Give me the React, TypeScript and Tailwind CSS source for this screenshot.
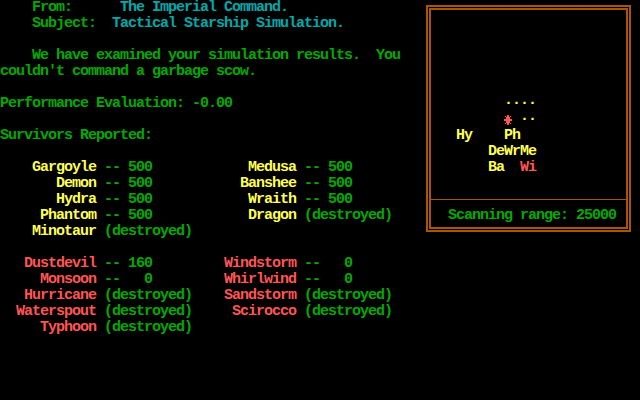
import React from 'react'

// DOS text-mode palette
const GREEN = 'text-[#00aa00]'
const CYAN = 'text-[#00aaaa]'
const YELLOW = 'text-[#ffff55]'
const RED = 'text-[#ff5555]'

type Seg = [string, string]

function Line({ segs }: { segs: Seg[] }) {
  return (
    <div className="h-4 whitespace-pre leading-4">
      {segs.map(([text, color], i) => (
        <span key={i} className={color}>
          {text}
        </span>
      ))}
    </div>
  )
}

const pad = (s: string, n: number) => s.padStart(n, ' ')

interface Ship {
  name: string
  value: string | null
}

function shipSegs(left: Ship, right: Ship | null, color: string): Seg[] {
  const segs: Seg[] = [
    [pad(left.name, 12), color],
    [left.value === null ? ' (destroyed)' : ' -- ' + pad(left.value, 3), GREEN],
  ]
  if (right) {
    const used = left.value === null ? 24 : 19
    segs.push([pad(right.name, 37 - used), color])
    segs.push([right.value === null ? ' (destroyed)' : ' -- ' + pad(right.value, 3), GREEN])
  }
  return segs
}

const monsters: [Ship, Ship | null][] = [
  [{ name: 'Gargoyle', value: '500' }, { name: 'Medusa', value: '500' }],
  [{ name: 'Demon', value: '500' }, { name: 'Banshee', value: '500' }],
  [{ name: 'Hydra', value: '500' }, { name: 'Wraith', value: '500' }],
  [{ name: 'Phantom', value: '500' }, { name: 'Dragon', value: null }],
  [{ name: 'Minotaur', value: null }, null],
]

const storms: [Ship, Ship | null][] = [
  [{ name: 'Dustdevil', value: '160' }, { name: 'Windstorm', value: '0' }],
  [{ name: 'Monsoon', value: '0' }, { name: 'Whirlwind', value: '0' }],
  [{ name: 'Hurricane', value: null }, { name: 'Sandstorm', value: null }],
  [{ name: 'Waterspout', value: null }, { name: 'Scirocco', value: null }],
  [{ name: 'Typhoon', value: null }, null],
]

// CP437 "sun" glyph drawn as pixels
function Sun() {
  return (
    <svg width="8" height="16" viewBox="0 0 8 16" shapeRendering="crispEdges" fill="#ff5555">
      <rect x="3" y="3" width="2" height="10" />
      <rect x="0" y="7" width="8" height="2" />
      <rect x="2" y="5" width="4" height="6" />
      <rect x="1" y="4" width="1" height="1" />
      <rect x="6" y="4" width="1" height="1" />
      <rect x="1" y="11" width="1" height="1" />
      <rect x="6" y="11" width="1" height="1" />
    </svg>
  )
}

export default function App() {
  return (
    <div
      className="flex h-[400px] w-[640px] bg-black text-[15px] font-bold tracking-[-1px]"
      style={{ fontFamily: '"Liberation Mono", "DejaVu Sans Mono", monospace' }}
    >
      {/* Report text */}
      <div className="w-[426px] shrink-0">
        <Line segs={[['    From:      ', GREEN], ['The Imperial Command.', CYAN]]} />
        <Line segs={[['    Subject:  ', GREEN], ['Tactical Starship Simulation.', CYAN]]} />
        <Line segs={[]} />
        <Line segs={[['    We have examined your simulation results.  You', GREEN]]} />
        <Line segs={[["couldn't command a garbage scow.", GREEN]]} />
        <Line segs={[]} />
        <Line segs={[['Performance Evaluation: -0.00', GREEN]]} />
        <Line segs={[]} />
        <Line segs={[['Survivors Reported:', GREEN]]} />
        <Line segs={[]} />
        {monsters.map(([l, r], i) => (
          <Line key={'m' + i} segs={shipSegs(l, r, YELLOW)} />
        ))}
        <Line segs={[]} />
        {storms.map(([l, r], i) => (
          <Line key={'s' + i} segs={shipSegs(l, r, RED)} />
        ))}
      </div>

      {/* Scanner window */}
      <div className="mt-[5px] h-[227px] w-[205px] border-2 border-[#aa5500] p-px">
        <div className="flex h-full flex-col border-2 border-[#aa5500]">
          <div className="h-[189px] pl-[25px] pt-[86px]">
            <Line segs={[['      ····', YELLOW]]} />
            <div className="flex h-4 whitespace-pre leading-4">
              <span className="w-12" />
              <Sun />
              <span className={YELLOW}> ··</span>
            </div>
            <Line segs={[['Hy    Ph', YELLOW]]} />
            <Line segs={[['    DeWrMe', YELLOW]]} />
            <Line segs={[['    Ba  ', YELLOW], ['Wi', RED]]} />
          </div>
          <div className="flex-1 border-t border-[#aa5500] pl-[17px] pt-2">
            <Line segs={[['Scanning range: 25000', GREEN]]} />
          </div>
        </div>
      </div>
    </div>
  )
}
